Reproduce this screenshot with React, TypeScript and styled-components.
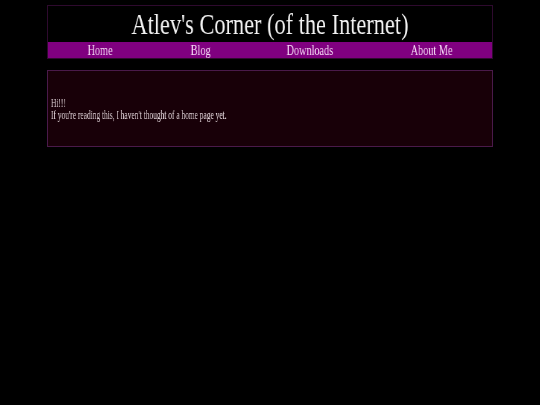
import React from "react";
import styled, { createGlobalStyle } from "styled-components";

const Global = createGlobalStyle`
  html, body { margin: 0; padding: 0; background: #000; }
  body { font-family: "Liberation Serif", "Times New Roman", serif; }
`;

const Page = styled.div`
  width: 540px;
  min-height: 405px;
  padding: 5px 47px 0 47px;
  box-sizing: border-box;
  display: flex;
  flex-direction: column;
  gap: 11px;
`;

const Header = styled.header`
  border: 1px solid #2e0a2e;
  display: flex;
  flex-direction: column;
  background: #000;
`;

const Title = styled.h1`
  margin: 0;
  height: 36px;
  display: flex;
  align-items: center;
  justify-content: center;
  font-weight: normal;
  font-size: 30px;
  color: #f2f2f2;
  line-height: 1;
`;

const Squeeze = styled.span<{ $origin?: string; $scale?: number }>`
  display: inline-block;
  transform: scaleX(${(p) => p.$scale ?? 0.745});
  transform-origin: ${(p) => p.$origin ?? "center"};
  white-space: nowrap;
  will-change: transform;
`;

const Nav = styled.nav`
  height: 16px;
  background: #800080;
  display: grid;
  grid-template-columns: 104fr 98fr 122fr 122fr;
`;

const NavItem = styled.a`
  display: flex;
  align-items: center;
  justify-content: center;
  padding-top: 1px;
  color: #f4d8f4;
  font-size: 14px;
  line-height: 1;
  text-decoration: none;
`;

const Content = styled.main`
  height: 77px;
  box-sizing: border-box;
  border: 1px solid #4a1a4a;
  background: #180008;
  padding: 26px 3px 0 3px;
  color: #e6d8de;
  font-size: 11.5px;
  line-height: 12px;
`;

const Line = styled.div`
  white-space: nowrap;
`;

export default function App() {
  return (
    <>
      <Global />
      <Page>
        <Header>
          <Title>
            <Squeeze>Atlev's Corner (of the Internet)</Squeeze>
          </Title>
          <Nav>
            <NavItem href="#"><Squeeze $scale={0.73}>Home</Squeeze></NavItem>
            <NavItem href="#"><Squeeze $scale={0.73}>Blog</Squeeze></NavItem>
            <NavItem href="#"><Squeeze $scale={0.73}>Downloads</Squeeze></NavItem>
            <NavItem href="#"><Squeeze $scale={0.73}>About Me</Squeeze></NavItem>
          </Nav>
        </Header>
        <Content>
          <Line><Squeeze $origin="left" $scale={0.645}>Hi!!!</Squeeze></Line>
          <Line><Squeeze $origin="left" $scale={0.645}>If you're reading this, I haven't thought of a home page yet.</Squeeze></Line>
        </Content>
      </Page>
    </>
  );
}
